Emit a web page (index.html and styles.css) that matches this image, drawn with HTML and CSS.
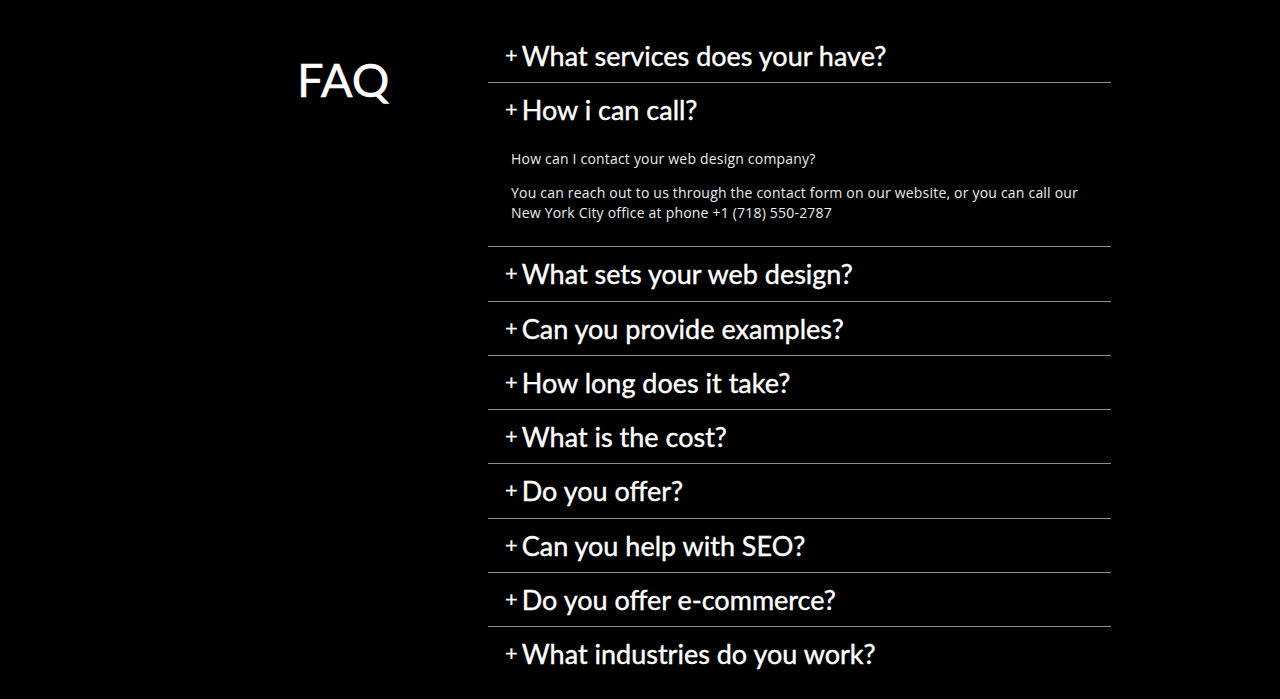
FILE: index.html
```html
<!DOCTYPE html>
<html lang="en">
<head>
<meta charset="utf-8">
<title>FAQ</title>
<link rel="stylesheet" href="styles.css">
</head>
<body>
<main class="faq">
  <h1 class="faq-title">FAQ</h1>
  <div class="faq-list">
    <div class="item"><div class="q"><span class="plus">+</span>What services does your have?</div></div>
    <div class="item open">
      <div class="q"><span class="plus">+</span>How i can call?</div>
      <div class="a">
        <p>How can I contact your web design company?</p>
        <p>You can reach out to us through the contact form on our website, or you can call our New York City office at phone +1 (718) 550-2787</p>
      </div>
    </div>
    <div class="item"><div class="q"><span class="plus">+</span>What sets your web design?</div></div>
    <div class="item"><div class="q"><span class="plus">+</span>Can you provide examples?</div></div>
    <div class="item"><div class="q"><span class="plus">+</span>How long does it take?</div></div>
    <div class="item"><div class="q"><span class="plus">+</span>What is the cost?</div></div>
    <div class="item"><div class="q"><span class="plus">+</span>Do you offer?</div></div>
    <div class="item"><div class="q"><span class="plus">+</span>Can you help with SEO?</div></div>
    <div class="item"><div class="q"><span class="plus">+</span>Do you offer e-commerce?</div></div>
    <div class="item last"><div class="q"><span class="plus">+</span>What industries do you work?</div></div>
  </div>
</main>
</body>
</html>
```
FILE: styles.css
```css
html, body {
  margin: 0;
  padding: 0;
  background: #000;
  color: #fff;
}
body {
  font-family: "Lato", "Open Sans", sans-serif;
}
.faq {
  display: grid;
  grid-template-columns: 190px 623px;
  padding: 28.75px 0 0 298px;
}
.faq-title {
  margin: 0 0 0 -1px;
  padding-top: 22px;
  font-size: 47px;
  font-weight: 400;
  line-height: 56px;
  -webkit-text-stroke: 0.5px #fff;
}
.faq-list {
  display: flex;
  flex-direction: column;
}
.item {
  border-bottom: 1px solid #8e8e8e;
}
.item.last {
  border-bottom: none;
}
.q {
  height: 53.25px;
  display: flex;
  align-items: center;
  padding-left: 17px;
  font-size: 27px;
  font-weight: 400;
  -webkit-text-stroke: 0.4px #fff;
}
.plus {
  font-size: 22px;
  margin-right: 4px;
  position: relative;
  top: -1px;
  -webkit-text-stroke: 0.2px #fff;
}
.a {
  padding: 13px 25px 23px 23px;
  font-family: "Open Sans", sans-serif;
  font-size: 14px;
  letter-spacing: 0.2px;
  line-height: 20px;
  color: #ececec;
}
.a p {
  margin: 0;
}
.a p + p {
  margin-top: 14px;
}
```
